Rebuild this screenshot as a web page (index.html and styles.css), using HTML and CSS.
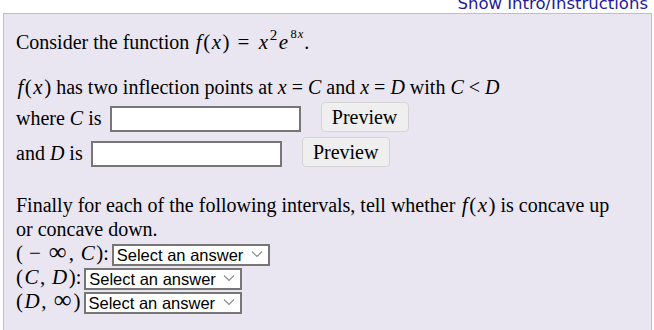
FILE: index.html
```html
<!DOCTYPE html>
<html lang="en">

<head>
    <meta charset="UTF-8" />
    <meta name="viewport" content="width=device-width, initial-scale=1.0" />
    <title>Question</title>
    <link rel="stylesheet" href="styles.css">
</head>

<body>

    <div class="intro">
        <a href="#" class="intro-link">Show Intro/Instructions</a>
    </div>

    <div class="question">

        <div class="line first">
            Consider the function
            <span class="math"><i>f</i>(<i>x</i>)<span class="op">=</span><i>x</i><sup>2</sup><i>e</i><sup class="small">8<i>x</i></sup></span>.
        </div>

        <div class="line second">
            <span class="math"><i>f</i>(<i>x</i>)</span> has two inflection points at <i>x</i> = <i>C</i> and <i>x</i> = <i>D</i> with <i>C</i> &lt; <i>D</i>
        </div>

        <div class="answer-row row-c">
            <span class="label">where <i>C</i> is</span>
            <input type="text" class="answer-box">
            <button class="preview-btn">Preview</button>
        </div>

        <div class="answer-row row-d">
            <span class="label">and <i>D</i> is</span>
            <input type="text" class="answer-box">
            <button class="preview-btn">Preview</button>
        </div>

        <div class="line finally">
            Finally for each of the following intervals, tell whether <span class="math"><i>f</i>(<i>x</i>)</span> is concave up or concave down.
        </div>

        <div class="select-row">
            <span class="math">(<span class="minus">&minus;</span><span class="inf">&infin;</span>, <i>C</i>)</span>:
            <span class="select-wrap">
                <select class="answer-select">
                    <option>Select an answer</option>
                    <option>Concave up</option>
                    <option>Concave down</option>
                </select>
                <svg class="chevron" width="12" height="8" viewBox="0 0 12 8"><path d="M1 1.5 L6 6.5 L11 1.5" fill="none" stroke="#8a8a8a" stroke-width="1.1" /></svg>
            </span>
        </div>

        <div class="select-row">
            <span class="math">(<i>C</i>, <i>D</i>)</span>:
            <span class="select-wrap">
                <select class="answer-select">
                    <option>Select an answer</option>
                    <option>Concave up</option>
                    <option>Concave down</option>
                </select>
                <svg class="chevron" width="12" height="8" viewBox="0 0 12 8"><path d="M1 1.5 L6 6.5 L11 1.5" fill="none" stroke="#8a8a8a" stroke-width="1.1" /></svg>
            </span>
        </div>

        <div class="select-row">
            <span class="math">(<i>D</i>, <span class="inf">&infin;</span>)</span>
            <span class="select-wrap">
                <select class="answer-select">
                    <option>Select an answer</option>
                    <option>Concave up</option>
                    <option>Concave down</option>
                </select>
                <svg class="chevron" width="12" height="8" viewBox="0 0 12 8"><path d="M1 1.5 L6 6.5 L11 1.5" fill="none" stroke="#8a8a8a" stroke-width="1.1" /></svg>
            </span>
        </div>

    </div>

</body>

</html>
```

FILE: styles.css
```css
* {
    box-sizing: border-box;
}

body {
    margin: 0;
    padding: 0 2px 0 3px;
    background-color: #ffffff;
    font-family: "Liberation Serif", "Times New Roman", serif;
    font-size: 20px;
    color: #000000;
    overflow: hidden;
}

/* top link */

.intro {
    text-align: right;
    margin-top: -9px;
    height: 22px;
    padding-right: 4px;
}

.intro-link {
    font-family: "DejaVu Sans", Verdana, sans-serif;
    font-size: 16.5px;
    line-height: 20px;
    color: #1c1ca0;
    text-decoration: none;
}

/* question box */

.question {
    background-color: #e9e6f2;
    border: 1px solid #bcbcd8;
    border-bottom: none;
    height: 330px;
    padding: 16px 26px 0 12px;
}

.line {
    line-height: 24px;
}

.second {
    margin-top: 21px;
}

.finally {
    margin-top: 25px;
}

/* math looks a bit wider than the text */

.math {
    font-size: 21px;
}

.math i {
    font-style: italic;
    padding: 0 1.5px;
}

.math .op {
    padding: 0 8px;
}

.math .minus {
    padding: 0 6px;
}

.math .inf {
    font-size: 25px;
    line-height: 0;
    padding: 0 2px;
}

sup {
    font-size: 15px;
    line-height: 0;
    vertical-align: 9px;
}

sup.small {
    font-size: 12.5px;
    vertical-align: 11px;
    padding-left: 1px;
}

sup.small i {
    padding: 0 1px;
}

/* answer rows */

.answer-row {
    display: flex;
    align-items: center;
    height: 30px;
}

.row-c {
    margin-top: 4px;
}

.row-d {
    margin-top: 5px;
}

.answer-box {
    width: 191px;
    height: 26px;
    margin: 1px 20px 0 8px;
    border: 2px solid #767676;
    background-color: #ffffff;
}

.preview-btn {
    width: 88px;
    height: 30px;
    margin-top: -2px;
    font-family: "Liberation Serif", "Times New Roman", serif;
    font-size: 20px;
    color: #000000;
    background-color: #efefef;
    border: 1px solid #d4d4d4;
    border-radius: 4px;
}

/* select rows */

.select-row {
    height: 24px;
    line-height: 24px;
    display: flex;
    align-items: center;
}

.select-row:first-of-type {
    margin-top: 0;
}

.select-wrap {
    position: relative;
    display: inline-block;
    height: 22px;
    margin-left: 3px;
    margin-top: -1px;
}

.answer-select {
    width: 158px;
    height: 22px;
    padding: 0 0 0 3px;
    font-family: "Liberation Sans", Arial, sans-serif;
    font-size: 16.5px;
    color: #000000;
    background-color: #ffffff;
    border: 2px solid #767676;
    border-radius: 0;
    appearance: none;
    -webkit-appearance: none;
}

.chevron {
    position: absolute;
    right: 7px;
    top: 8px;
    pointer-events: none;
}
```
